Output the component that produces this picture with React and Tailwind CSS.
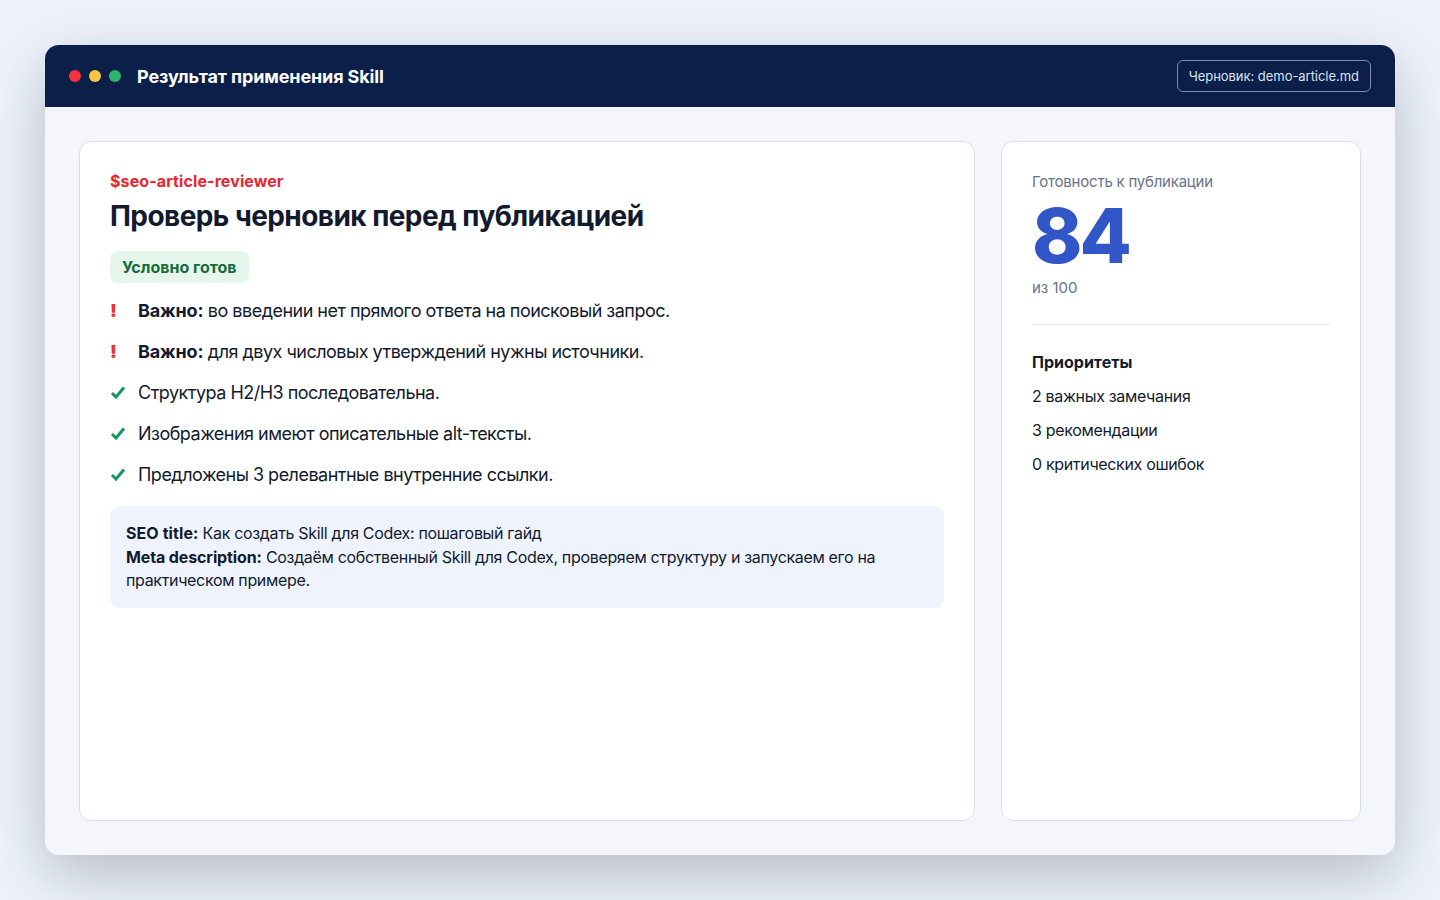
const items = [
  { kind: "warn", bold: "Важно:", text: " во введении нет прямого ответа на поисковый запрос." },
  { kind: "warn", bold: "Важно:", text: " для двух числовых утверждений нужны источники." },
  { kind: "ok", text: "Структура H2/H3 последовательна." },
  { kind: "ok", text: "Изображения имеют описательные alt-тексты." },
  { kind: "ok", text: "Предложены 3 релевантные внутренние ссылки." },
];

const priorities = ["2 важных замечания", "3 рекомендации", "0 критических ошибок"];

function CheckIcon() {
  return (
    <svg width="16" height="14" viewBox="0 0 16 14" fill="none">
      <path d="M2 7L6 11L14 1.5" stroke="#16955f" strokeWidth="3" />
    </svg>
  );
}

export default function App() {
  return (
    <div className="min-h-[900px] bg-[#eef3fb] px-[45px] py-[45px] font-['Inter',sans-serif] text-[#121a2d]">
      <div className="flex h-[810px] flex-col overflow-hidden rounded-[14px] bg-[#f4f6fb] shadow-[0_20px_60px_rgba(15,23,42,0.25)]">
        <header className="flex h-[62px] shrink-0 items-center justify-between bg-[#0b1f48] px-6">
          <div className="flex items-center">
            <span className="h-3 w-3 rounded-full bg-[#f5333f]" />
            <span className="ml-2 h-3 w-3 rounded-full bg-[#f7c744]" />
            <span className="ml-2 h-3 w-3 rounded-full bg-[#2db56c]" />
            <span className="ml-4 pt-px text-[18px] font-bold leading-none tracking-[-0.12px] text-white">Результат применения Skill</span>
          </div>
          <div className="flex h-8 items-center rounded-md border border-[#7f8ca8] px-[11px] pt-px text-[13px] tracking-[-0.04px] text-[#dbe4f5]">
            Черновик: demo-article.md
          </div>
        </header>
        <main className="flex flex-1 gap-[26px] p-[34px]">
          <section className="flex-1 rounded-xl border border-[#d8e0ee] bg-white px-[30px] pt-[29px]">
            <div className="text-[16px] font-bold leading-[20px] tracking-[0.1px] text-[#e8262f]">$seo-article-reviewer</div>
            <h1 className="mt-[7px] text-[28px] font-bold leading-[36px] tracking-[-0.56px]">Проверь черновик перед публикацией</h1>
            <div className="mt-[17px] inline-flex h-[32px] items-center rounded-lg bg-[#e6f6ec] px-3 text-[16px] font-bold text-[#146c3c]">
              Условно готов
            </div>
            <ul className="mt-[7px]">
              {items.map((item) => (
                <li key={item.text} className="flex h-[41px] items-center text-[18px] tracking-[-0.51px]">
                  <span className="flex w-[28px] shrink-0 items-center">
                    {item.kind === "warn" ? (
                      <span className="text-[18px] font-black text-[#e8342f]">!</span>
                    ) : (
                      <CheckIcon />
                    )}
                  </span>
                  <span className="whitespace-pre">
                    {item.bold && <strong className="font-bold tracking-[-0.15px]">{item.bold}</strong>}
                    {item.text}
                  </span>
                </li>
              ))}
            </ul>
            <div className="mt-[11px] rounded-[10px] bg-[#eff3fe] px-4 pb-[15.5px] pt-4 text-[16px] leading-[23.5px] tracking-[-0.33px]">
              <strong className="font-bold tracking-[0.08px]">SEO title:</strong> Как создать Skill для Codex: пошаговый гайд
              <br />
              <strong className="font-bold tracking-[-0.12px]">Meta description:</strong> Создаём собственный Skill для Codex, проверяем структуру и запускаем его на практическом примере.
            </div>
          </section>
          <aside className="w-[360px] shrink-0 rounded-xl border border-[#d8e0ee] bg-white px-[30px] pt-[30px]">
            <div className="text-[15px] leading-[20px] tracking-[-0.22px] text-[#68728a]">Готовность к публикации</div>
            <div className="mt-[5px] text-[76px] font-extrabold leading-[76px] tracking-[-3px] text-[#3056c8]">84</div>
            <div className="mt-[5px] text-[15px] leading-[20px] text-[#68728a]">из 100</div>
            <div className="mt-[26px] border-t border-[#e3e8f1]" />
            <div className="mt-[27px] text-[16px] font-bold leading-[20px]">Приоритеты</div>
            <ul className="mt-[7px]">
              {priorities.map((p) => (
                <li key={p} className="flex h-[34px] items-center text-[16px] tracking-[-0.33px]">{p}</li>
              ))}
            </ul>
          </aside>
        </main>
      </div>
    </div>
  );
}
